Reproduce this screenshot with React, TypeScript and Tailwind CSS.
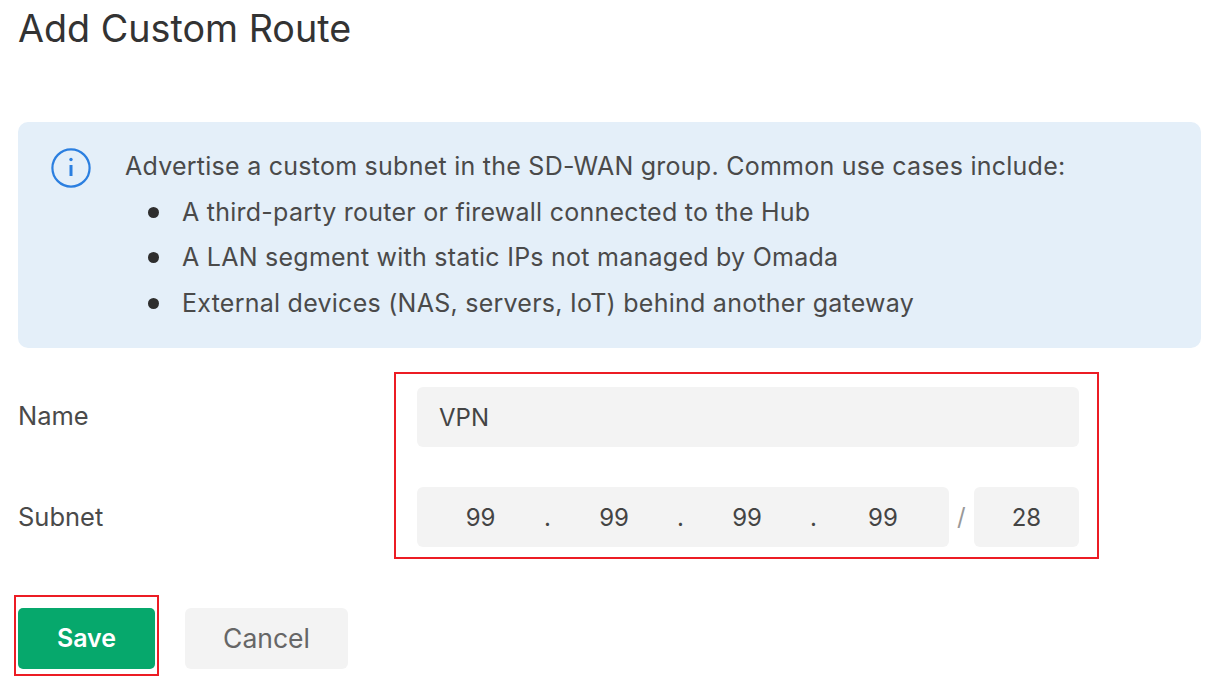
const items = [
  "A third-party router or firewall connected to the Hub",
  "A LAN segment with static IPs not managed by Omada",
  "External devices (NAS, servers, IoT) behind another gateway",
];
export default function App() {
  return (
    <div className="w-[1214px] h-[684px] overflow-hidden bg-white pl-[18px] pr-[13px] text-[#3a3a3a] font-['Inter',sans-serif]">
      <h1 className="h-[122px] pt-[5px] text-[37.7px] leading-[46px] font-normal text-[#333]">Add Custom Route</h1>
      <div className="flex h-[226px] rounded-[10px] bg-[#e4eff9] pl-[33px] pt-[26px]">
        <svg width="40" height="40" viewBox="0 0 40 40" fill="none" stroke="#2b7fe0" strokeWidth="2.2" className="shrink-0">
          <circle cx="20" cy="20" r="18.6" />
          <path d="M20 17v11" strokeWidth="3" />
          <circle cx="20" cy="11.5" r="1.7" fill="#2b7fe0" stroke="none" />
        </svg>
        <div className="ml-[34px] mt-[-4px] text-[25px] tracking-[0.25px] leading-[45.5px] text-[#4a4a4a]">
          <p>Advertise a custom subnet in the SD-WAN group. Common use cases include:</p>
          <ul className="pl-[23px]">
            {items.map((t) => (
              <li key={t} className="flex items-center">
                <span className="h-[11px] w-[11px] shrink-0 rounded-full bg-[#2e2e2e]" />
                <span className="ml-[23px]">{t}</span>
              </li>
            ))}
          </ul>
        </div>
      </div>
      <div className="mt-[24px] flex h-[187px]">
        <div className="w-[376px] text-[25.5px] text-[#4a4a4a]">
          <div className="flex h-[88px] items-center">Name</div>
          <div className="mt-[13px] flex h-[86px] items-center pt-[2px]">Subnet</div>
        </div>
        <div className="w-[705px] h-[187px] border-2 border-[#ec1c24] pl-[21px] pr-[18px] pt-[13px]">
          <div className="flex h-[60px] items-center rounded-[6px] bg-[#f3f3f3] pl-[22px] pt-[2px] text-[24px] text-[#444]">VPN</div>
          <div className="mt-[40px] flex h-[60px] items-center text-[24px] text-[#444]">
            <div className="flex h-full w-[532px] items-center rounded-[6px] bg-[#f3f3f3] pt-[2px]">
              <span className="w-[128px] text-center">99</span><span>.</span>
              <span className="w-[127px] text-center">99</span><span>.</span>
              <span className="w-[127px] text-center">99</span><span>.</span>
              <span className="w-[133px] text-center">99</span>
            </div>
            <span className="w-[25px] text-center text-[#999]">/</span>
            <div className="flex h-full w-[106px] items-center justify-center rounded-[6px] bg-[#f3f3f3] pt-[2px]">28</div>
          </div>
        </div>
      </div>
      <div className="mt-[36px] flex">
        <div className="ml-[-4px] h-[81px] w-[145px] border-2 border-[#ec1c24] pl-[2px] pt-[11px]">
          <button className="h-[61px] w-[137px] rounded-[5px] bg-[#06a86c] text-[25px] font-semibold text-white">Save</button>
        </div>
        <button className="ml-[26px] mt-[13px] h-[61px] w-[163px] rounded-[6px] bg-[#f3f3f3] text-[26.5px] text-[#666]">Cancel</button>
      </div>
    </div>
  );
}
